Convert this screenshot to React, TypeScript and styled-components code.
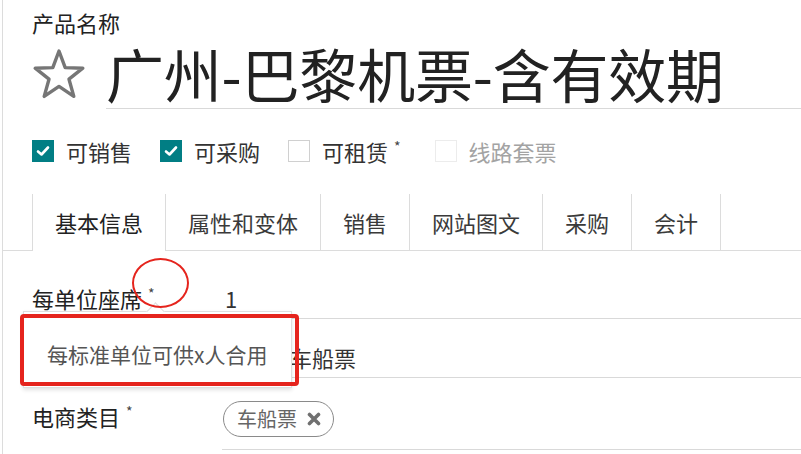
import React from 'react';
import styled, { createGlobalStyle } from 'styled-components';

const GlobalStyle = createGlobalStyle`
  html, body {
    margin: 0;
    padding: 0;
    background: #ffffff;
  }
  body {
    font-family: "Noto Sans CJK SC", "Noto Sans", sans-serif;
    color: #222;
  }
`;

const Sheet = styled.div`
  position: relative;
  width: 801px;
  height: 454px;
  overflow: hidden;
  box-sizing: border-box;
  margin-left: 2px;
  border-left: 1px solid #dcdcdc;
  padding-left: 29px;
`;

const FieldLabel = styled.div`
  font-size: 22px;
  line-height: 30px;
  padding-top: 7px;
  color: #222;
`;

const TitleRow = styled.div`
  display: flex;
  align-items: center;
  gap: 20px;
  height: 72px;
`;

const StarIcon = styled.svg`
  width: 54px;
  height: 52px;
  flex: none;
  margin-top: 2px;
`;

const Title = styled.h1`
  flex: 1;
  margin: 0;
  font-weight: 400;
  font-size: 58px;
  line-height: 72px;
  height: 72px;
  box-sizing: border-box;
  border-bottom: 1px solid #d9d9d9;
  color: #222;
  white-space: nowrap;
  letter-spacing: -0.2px;
`;

const OptionRow = styled.div`
  display: flex;
  align-items: center;
  height: 84px;
`;

const Option = styled.label<{ $disabled?: boolean; $wide?: boolean }>`
  display: flex;
  align-items: center;
  gap: 12px;
  margin-right: ${p => (p.$wide ? '34px' : '28px')};
  font-size: 22px;
  line-height: 30px;
  color: ${p => (p.$disabled ? '#a3a3a3' : '#333')};
`;

const Box = styled.span<{ $checked?: boolean; $disabled?: boolean }>`
  width: 22px;
  height: 22px;
  box-sizing: border-box;
  display: inline-flex;
  align-items: center;
  justify-content: center;
  background: ${p => (p.$checked ? '#017e84' : '#fff')};
  border: 1px solid ${p => (p.$checked ? '#017e84' : p.$disabled ? '#ececec' : '#d0d0d0')};
`;

const Required = styled.sup`
  font-size: 14px;
  line-height: 0;
  margin-left: 6px;
  color: #444;
  vertical-align: 9px;
`;

const Tabs = styled.div`
  display: flex;
  margin-left: -31px;
  padding-left: 31px;
  height: 56px;
  border-bottom: 1px solid #dcdcdc;
  margin-top: 1px;
`;

const Tab = styled.div<{ $active?: boolean; $first?: boolean }>`
  padding: 0 22px;
  font-size: 22px;
  line-height: 56px;
  box-sizing: border-box;
  color: ${p => (p.$active ? '#222' : '#3a3a3a')};
  border-right: 1px solid #dcdcdc;
  border-left: ${p => (p.$first ? '1px solid #dcdcdc' : 'none')};
  background: #fff;
  margin-bottom: ${p => (p.$active ? '-1px' : '0')};
  height: ${p => (p.$active ? '57px' : '56px')};
`;

const Form = styled.div`
  margin-top: 9px;
  display: flex;
  flex-direction: column;
`;

const Row = styled.div`
  display: grid;
  grid-template-columns: 190px 1fr;
`;

const Label = styled.div`
  padding-top: 24px;
  font-size: 22px;
  line-height: 28px;
  color: #222;
`;

const Value = styled.div<{ $indent?: number; $tags?: boolean }>`
  padding: ${p => (p.$tags ? '23px 0 12px 1px' : '24px 3px 6px')};
  padding-left: ${p => (p.$indent ? `${p.$indent}px` : undefined)};
  font-size: 22px;
  line-height: 28px;
  color: #333;
  border-bottom: 1px solid #d9d9d9;
`;

const Tag = styled.span`
  display: inline-flex;
  align-items: center;
  gap: 10px;
  height: 36px;
  box-sizing: border-box;
  padding: 0 12px 0 13px;
  border: 1.5px solid #8a8a8a;
  border-radius: 18px;
  font-size: 20px;
  color: #666;
`;

const Tooltip = styled.div`
  position: absolute;
  left: 20px;
  top: 311px;
  width: 269px;
  height: 77px;
  box-sizing: border-box;
  padding: 30px 0 0 23px;
  background: #fff;
  border: 1px solid #dedede;
  box-shadow: 0 2px 4px rgba(0, 0, 0, 0.12);
  font-size: 21px;
  line-height: 24px;
  color: #555;
  white-space: nowrap;

  &::before {
    content: '';
    position: absolute;
    top: -7px;
    left: 125px;
    width: 12px;
    height: 12px;
    background: #fff;
    border-left: 1px solid #dedede;
    border-top: 1px solid #dedede;
    transform: rotate(45deg);
  }
`;

const RedCircle = styled.div`
  position: absolute;
  left: 129px;
  top: 258px;
  width: 57px;
  height: 50px;
  box-sizing: border-box;
  border: 2.5px solid #e5241d;
  border-radius: 50%;
`;

const RedBox = styled.div`
  position: absolute;
  left: 17px;
  top: 314px;
  width: 279px;
  height: 72px;
  box-sizing: border-box;
  border: 4px solid #e5241d;
  border-radius: 4px;
`;

const Check = () => (
  <svg width="14" height="12" viewBox="0 0 14 12">
    <path d="M2 6.5 L5.5 9.5 L12 2.5" fill="none" stroke="#fff" strokeWidth="2.6" strokeLinecap="round" strokeLinejoin="round" />
  </svg>
);

const CloseIcon = () => (
  <svg width="14" height="14" viewBox="0 0 14 14">
    <path d="M2.5 2.5 L11.5 11.5 M11.5 2.5 L2.5 11.5" stroke="#707070" strokeWidth="3.6" strokeLinecap="round" />
  </svg>
);

const tabs = ['基本信息', '属性和变体', '销售', '网站图文', '采购', '会计'];

export default function App() {
  return (
    <>
      <GlobalStyle />
      <Sheet>
        <FieldLabel>产品名称</FieldLabel>
        <TitleRow>
          <StarIcon viewBox="0 0 54 52">
            <path
              d="M27 3 L33.2 19.6 L50.8 20.2 L37 31.2 L41.8 48.4 L27 38.4 L12.2 48.4 L17 31.2 L3.2 20.2 L20.8 19.6 Z"
              fill="none"
              stroke="#767676"
              strokeWidth="3.4"
              strokeLinejoin="round"
            />
          </StarIcon>
          <Title>广州-巴黎机票-含有效期</Title>
        </TitleRow>

        <OptionRow>
          <Option>
            <Box $checked><Check /></Box>可销售
          </Option>
          <Option>
            <Box $checked><Check /></Box>可采购
          </Option>
          <Option $wide>
            <Box />
            <span>可租赁<Required>*</Required></span>
          </Option>
          <Option $disabled>
            <Box $disabled />线路套票
          </Option>
        </OptionRow>

        <Tabs>
          {tabs.map((t, i) => (
            <Tab key={t} $active={i === 0} $first={i === 0}>{t}</Tab>
          ))}
        </Tabs>

        <Form>
          <Row>
            <Label>每单位座席<Required>*</Required></Label>
            <Value>1</Value>
          </Row>
          <Row>
            <Label />
            <Value $indent={68}>车船票</Value>
          </Row>
          <Row>
            <Label>电商类目<Required>*</Required></Label>
            <Value $tags>
              <Tag>车船票<CloseIcon /></Tag>
            </Value>
          </Row>
        </Form>

        <Tooltip>每标准单位可供x人合用</Tooltip>
        <RedCircle />
        <RedBox />
      </Sheet>
    </>
  );
}
